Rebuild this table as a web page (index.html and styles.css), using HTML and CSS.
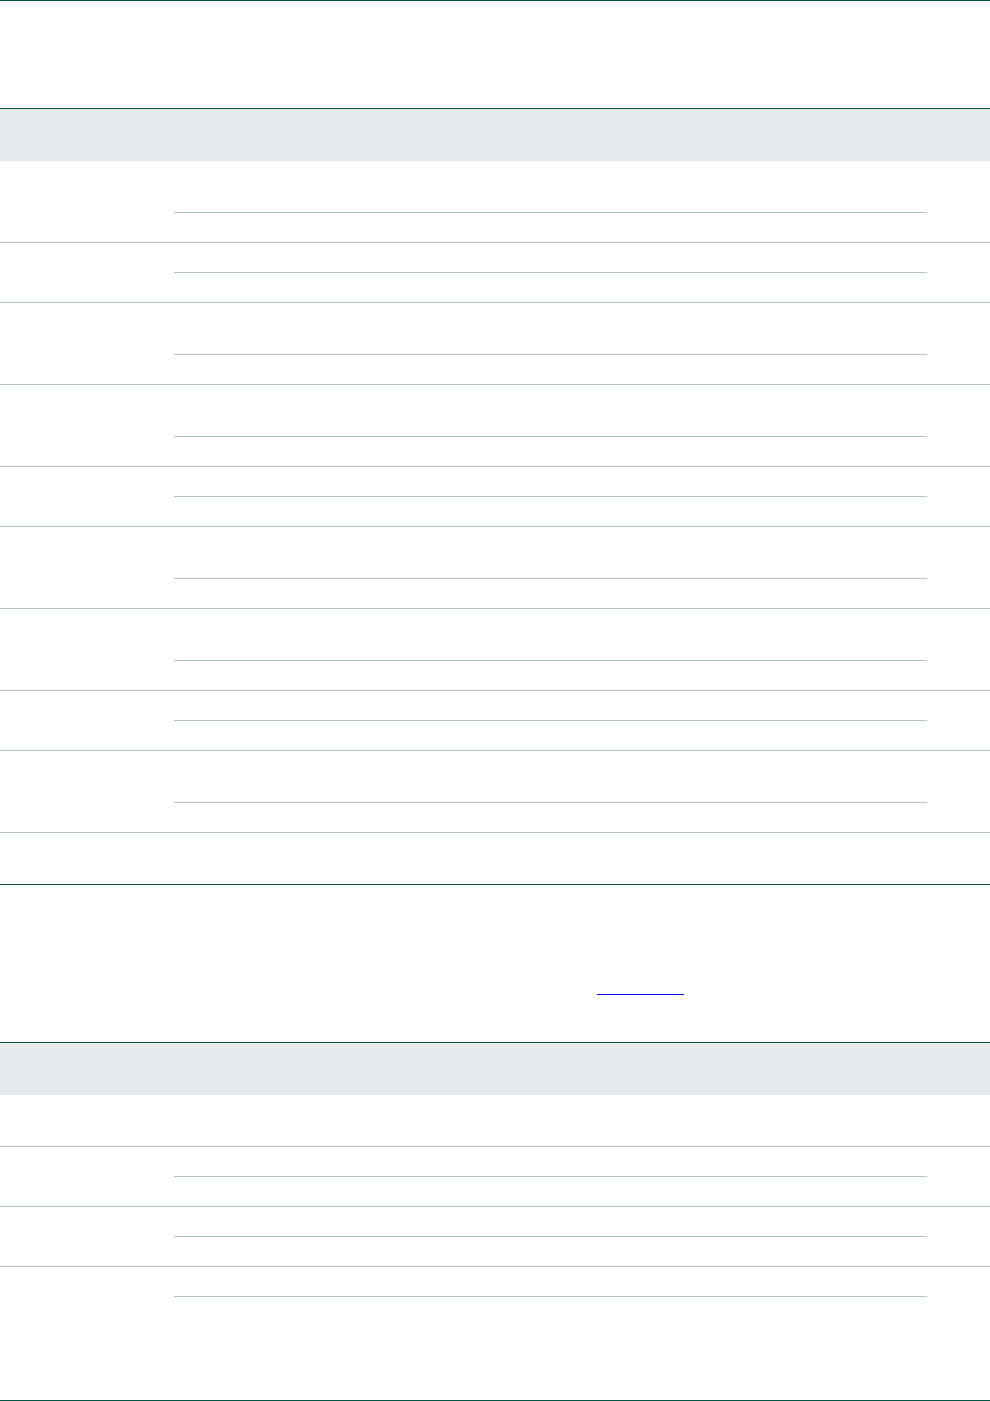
FILE: index.html
```html
<!DOCTYPE html>
<html lang="en">
	<head>
		<meta charset="UTF-8" />
		<meta name="viewport" content="width=device-width, initial-scale=1.0" />
		<title>Tables</title>
		<link rel="stylesheet" href="styles.css">
	</head>
	<body>
		<div class="prev-end"></div>
		<div class="intro"></div>

		<div class="table">
			<div class="thead"></div>
			<div class="row">
				<div class="cell"></div>
				<div class="subs"><div class="sub tall"></div><div class="sub"></div></div>
				<div class="cell"></div>
			</div>
			<div class="row">
				<div class="cell"></div>
				<div class="subs"><div class="sub"></div><div class="sub"></div></div>
				<div class="cell"></div>
			</div>
			<div class="row">
				<div class="cell"></div>
				<div class="subs"><div class="sub tall"></div><div class="sub"></div></div>
				<div class="cell"></div>
			</div>
			<div class="row">
				<div class="cell"></div>
				<div class="subs"><div class="sub tall"></div><div class="sub"></div></div>
				<div class="cell"></div>
			</div>
			<div class="row">
				<div class="cell"></div>
				<div class="subs"><div class="sub"></div><div class="sub"></div></div>
				<div class="cell"></div>
			</div>
			<div class="row">
				<div class="cell"></div>
				<div class="subs"><div class="sub tall"></div><div class="sub"></div></div>
				<div class="cell"></div>
			</div>
			<div class="row">
				<div class="cell"></div>
				<div class="subs"><div class="sub tall"></div><div class="sub"></div></div>
				<div class="cell"></div>
			</div>
			<div class="row">
				<div class="cell"></div>
				<div class="subs"><div class="sub"></div><div class="sub"></div></div>
				<div class="cell"></div>
			</div>
			<div class="row">
				<div class="cell"></div>
				<div class="subs"><div class="sub tall"></div><div class="sub"></div></div>
				<div class="cell"></div>
			</div>
			<div class="row">
				<div class="cell"></div>
				<div class="subs"><div class="sub tall"></div></div>
				<div class="cell"></div>
			</div>
		</div>

		<div class="intro second">
			<p class="note"><a class="ref" href="#"></a></p>
		</div>

		<div class="table">
			<div class="thead"></div>
			<div class="row">
				<div class="cell"></div>
				<div class="subs"><div class="sub tall"></div></div>
				<div class="cell"></div>
			</div>
			<div class="row">
				<div class="cell"></div>
				<div class="subs"><div class="sub"></div><div class="sub"></div></div>
				<div class="cell"></div>
			</div>
			<div class="row">
				<div class="cell"></div>
				<div class="subs"><div class="sub"></div><div class="sub"></div></div>
				<div class="cell"></div>
			</div>
			<div class="row">
				<div class="cell"></div>
				<div class="subs"><div class="sub"></div><div class="sub x4"></div></div>
				<div class="cell"></div>
			</div>
		</div>
	</body>
</html>
```

FILE: styles.css
```css
body {
	font-family: 'Liberation Sans', Arial, sans-serif;
	font-size: 14px;
	margin: 0;
	background-color: #fff;
	color: #222;
	width: 990px;
}
.prev-end {
	border-bottom: 1px solid #00533f;
}
.intro {
	height: 107px;
}
.intro.second {
	height: 157px;
}
.note {
	margin: 0;
	padding-top: 93px;
	padding-left: 597px;
}
.ref {
	display: block;
	width: 87px;
	height: 16px;
	border-bottom: 1px solid #0000ff;
	color: #0000ff;
}
.table {
	border-top: 1px solid #00533f;
	border-bottom: 1px solid #00533f;
}
.thead {
	height: 52px;
	background-color: #e6eceb;
}
.row {
	display: grid;
	grid-template-columns: 174px 753px 1fr;
	border-bottom: 1px solid #b0c7c0;
}
.row:last-child {
	border-bottom: none;
}
.sub {
	height: 29px;
	border-bottom: 1px solid #b0c7c0;
}
.sub:last-child {
	border-bottom: none;
}
.sub.tall {
	height: 51px;
}
.sub.x4 {
	height: 103px;
}
```
